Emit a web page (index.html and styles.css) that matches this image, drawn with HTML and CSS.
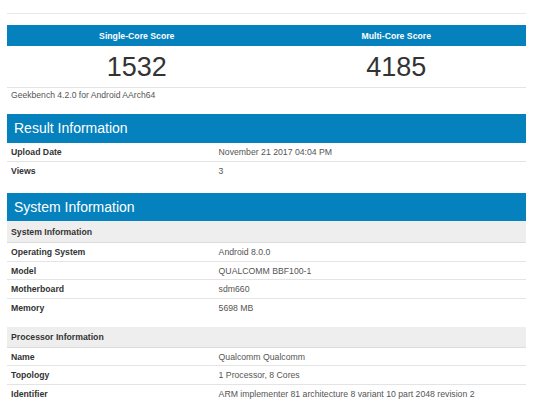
FILE: index.html
```html
<!DOCTYPE html>
<html>
<head>
<meta charset="utf-8">
<link rel="stylesheet" href="styles.css">
</head>
<body>
<div class="page">
  <div class="top-rule"></div>

  <div class="scores">
    <div class="score-head">
      <div class="score-col">Single-Core Score</div>
      <div class="score-col">Multi-Core Score</div>
    </div>
    <div class="score-vals">
      <div class="score-col">1532</div>
      <div class="score-col">4185</div>
    </div>
  </div>
  <div class="version">Geekbench 4.2.0 for Android AArch64</div>

  <div class="section">
    <div class="section-title">Result Information</div>
    <div class="row"><div class="label">Upload Date</div><div class="value">November 21 2017 04:04 PM</div></div>
    <div class="row last"><div class="label">Views</div><div class="value">3</div></div>
  </div>

  <div class="section">
    <div class="section-title">System Information</div>
    <div class="subhead">System Information</div>
    <div class="row"><div class="label">Operating System</div><div class="value">Android 8.0.0</div></div>
    <div class="row"><div class="label">Model</div><div class="value">QUALCOMM BBF100-1</div></div>
    <div class="row"><div class="label">Motherboard</div><div class="value">sdm660</div></div>
    <div class="row last"><div class="label">Memory</div><div class="value">5698 MB</div></div>
    <div class="subhead spaced">Processor Information</div>
    <div class="row"><div class="label">Name</div><div class="value">Qualcomm Qualcomm</div></div>
    <div class="row"><div class="label">Topology</div><div class="value">1 Processor, 8 Cores</div></div>
    <div class="row last"><div class="label">Identifier</div><div class="value">ARM implementer 81 architecture 8 variant 10 part 2048 revision 2</div></div>
  </div>
</div>
</body>
</html>
```
FILE: styles.css
```css
html, body {
  margin: 0;
  padding: 0;
  background: #ffffff;
}
body {
  font-family: "Liberation Sans", Arial, Helvetica, sans-serif;
  color: #333333;
  overflow: hidden;
}
.page {
  width: 519px;
  margin-left: 7px;
}
.top-rule {
  height: 13px;
  border-bottom: 1px solid #e8e8e8;
  margin-bottom: 11px;
}
.scores {
  border-bottom: 1px solid #e4e4e4;
}
.score-head {
  display: flex;
  background: #0581bd;
  height: 21px;
  align-items: center;
  color: #ffffff;
  font-weight: bold;
  font-size: 8.7px;
}
.score-vals {
  display: flex;
  height: 40px;
  padding-top: 1px;
  align-items: center;
  font-size: 27px;
  line-height: 27px;
  color: #333333;
}
.score-col {
  flex: 1;
  text-align: center;
}
.version {
  font-size: 8.6px;
  line-height: 12px;
  padding: 1px 0 0 4px;
  color: #555555;
  height: 25px;
}
.section {
  margin-bottom: 13px;
}
.section-title {
  background: #0581bd;
  color: #ffffff;
  font-size: 14px;
  height: 29px;
  line-height: 29px;
  padding-left: 7px;
}
.section + .section .section-title {
  height: 28px;
  line-height: 28px;
}
.subhead {
  background: #eeeeee;
  border-bottom: 1px solid #dcdcdc;
  height: 21px;
  line-height: 22px;
  padding-left: 4px;
  font-size: 8.7px;
  font-weight: bold;
  color: #333333;
}
.subhead.spaced {
  margin-top: 9px;
  height: 20px;
  line-height: 21px;
}
.row {
  display: flex;
  height: 17.6px;
  line-height: 18px;
  border-bottom: 1px solid #e4e4e4;
  font-size: 8.7px;
}
.row.last {
  border-bottom: 1px solid transparent;
}
.label {
  width: 40%;
  padding-left: 4px;
  box-sizing: border-box;
  font-weight: bold;
  color: #333333;
}
.value {
  flex: 1;
  padding-left: 4px;
  color: #555555;
  white-space: nowrap;
}
```
